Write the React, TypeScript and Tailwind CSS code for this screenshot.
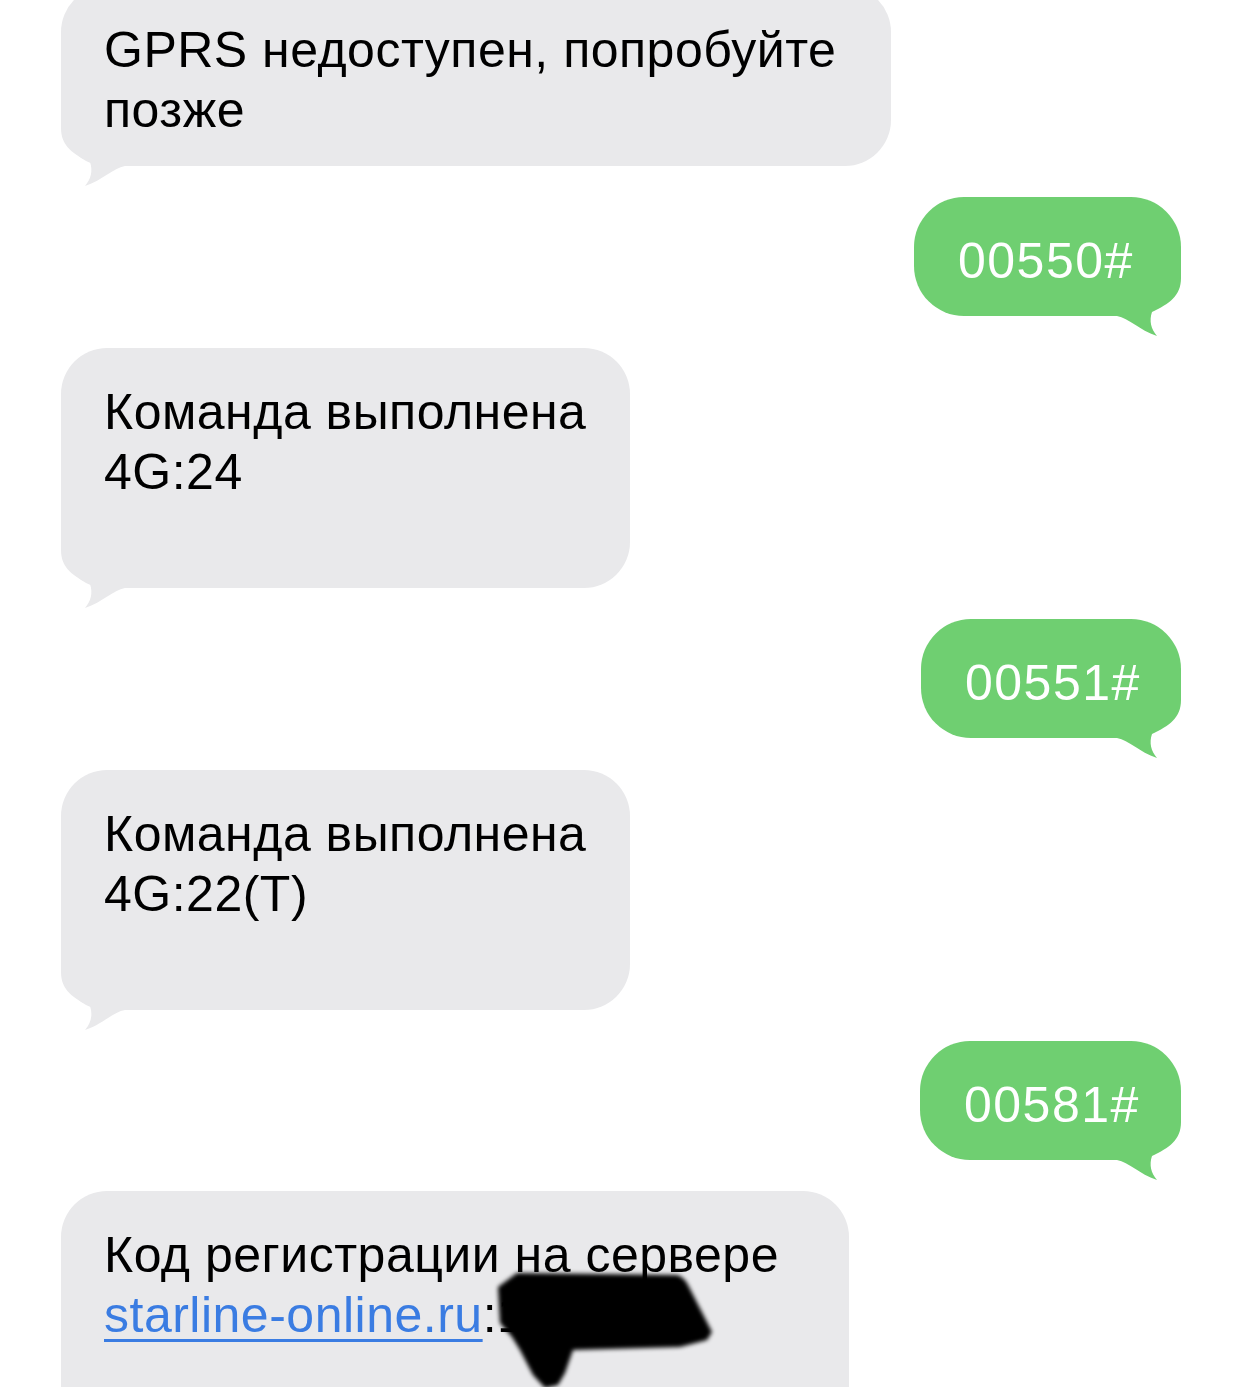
import React from "react";

type Msg =
  | { kind: "in"; width: string; lines: React.ReactNode[]; extra?: boolean; blob?: boolean }
  | { kind: "out"; width: string; text: string };

const messages: Msg[] = [
  { kind: "in", width: "w-[830px]", lines: ["GPRS недоступен, попробуйте", "позже"] },
  { kind: "out", width: "w-[267px]", text: "00550#" },
  { kind: "in", width: "w-[569px]", lines: ["Команда выполнена", "4G:24"], extra: true },
  { kind: "out", width: "w-[260px]", text: "00551#" },
  { kind: "in", width: "w-[569px]", lines: ["Команда выполнена", "4G:22(T)"], extra: true },
  { kind: "out", width: "w-[261px]", text: "00581#" },
  {
    kind: "in",
    width: "w-[788px]",
    blob: true,
    extra: true,
    lines: [
      "Код регистрации на сервере",
      <span key="link">
        <span className="text-[#3a7ce2] underline decoration-[3px] underline-offset-[7px]">
          starline-online.ru
        </span>
        :1
      </span>,
    ],
  },
];

function TailLeft() {
  return (
    <svg
      className="absolute left-0 bottom-[-22px]"
      width="70"
      height="72"
      viewBox="0 0 70 72"
    >
      <path
        d="M0,0 L70,0 L70,50 L64,50 C52,52 42,64 24,70 C30,63 32,55 29,46 C12,38 0,30 0,12 Z"
        fill="#e9e9eb"
      />
    </svg>
  );
}

function TailRight() {
  return (
    <svg
      className="absolute right-0 bottom-[-22px]"
      width="70"
      height="72"
      viewBox="0 0 70 72"
    >
      <path
        d="M70,0 L0,0 L0,50 L6,50 C18,52 28,64 46,70 C40,63 38,55 41,46 C58,38 70,30 70,12 Z"
        fill="#6fcf71"
      />
    </svg>
  );
}

// redaction scribble over the registration code
function Blob() {
  return (
    <svg
      className="absolute left-0 top-0 pointer-events-none"
      width="800"
      height="260"
      viewBox="0 0 800 260"
    >
      <defs>
        <filter id="soft" x="-10%" y="-10%" width="120%" height="120%">
          <feGaussianBlur stdDeviation="2" />
        </filter>
      </defs>
      <path
        d="M437,96 L456,82 L616,84 C622,86 625,90 627,94 L651,141 L646,149 L619,156 L512,159 L504,182 L497,194 L484,197 L472,184 L459,159 L451,146 L439,132 Z"
        fill="#000"
        filter="url(#soft)"
      />
    </svg>
  );
}

export default function App() {
  return (
    <div
      className="h-[1387px] w-[1242px] overflow-hidden bg-white"
      style={{ fontFamily: '"Liberation Sans", Arial, sans-serif' }}
    >
      <div className="-mt-[14px] flex flex-col gap-[31.4px] px-[61px]">
        {messages.map((m, i) =>
          m.kind === "in" ? (
            <div key={i} className="flex justify-start">
              <div
                className={`relative ${m.width} rounded-[46px] bg-[#e9e9eb] pl-[43px] pt-[34px] pb-[26px] text-[50px] leading-[60px] tracking-[0.5px] text-black`}
              >
                <TailLeft />
                <div className="relative">
                  {m.lines.map((l, j) => (
                    <div key={j} className="whitespace-nowrap">
                      {l}
                    </div>
                  ))}
                  {m.extra && <div>&nbsp;</div>}
                </div>
                {m.blob && <Blob />}
              </div>
            </div>
          ) : (
            <div key={i} className="flex justify-end">
              <div
                className={`relative ${m.width} rounded-[50px] bg-[#6fcf71] pl-[44px] pt-[34px] pb-[25px] text-[50px] leading-[60px] tracking-[1.5px] text-white`}
              >
                <TailRight />
                <div className="relative whitespace-nowrap">{m.text}</div>
              </div>
            </div>
          )
        )}
      </div>
    </div>
  );
}
